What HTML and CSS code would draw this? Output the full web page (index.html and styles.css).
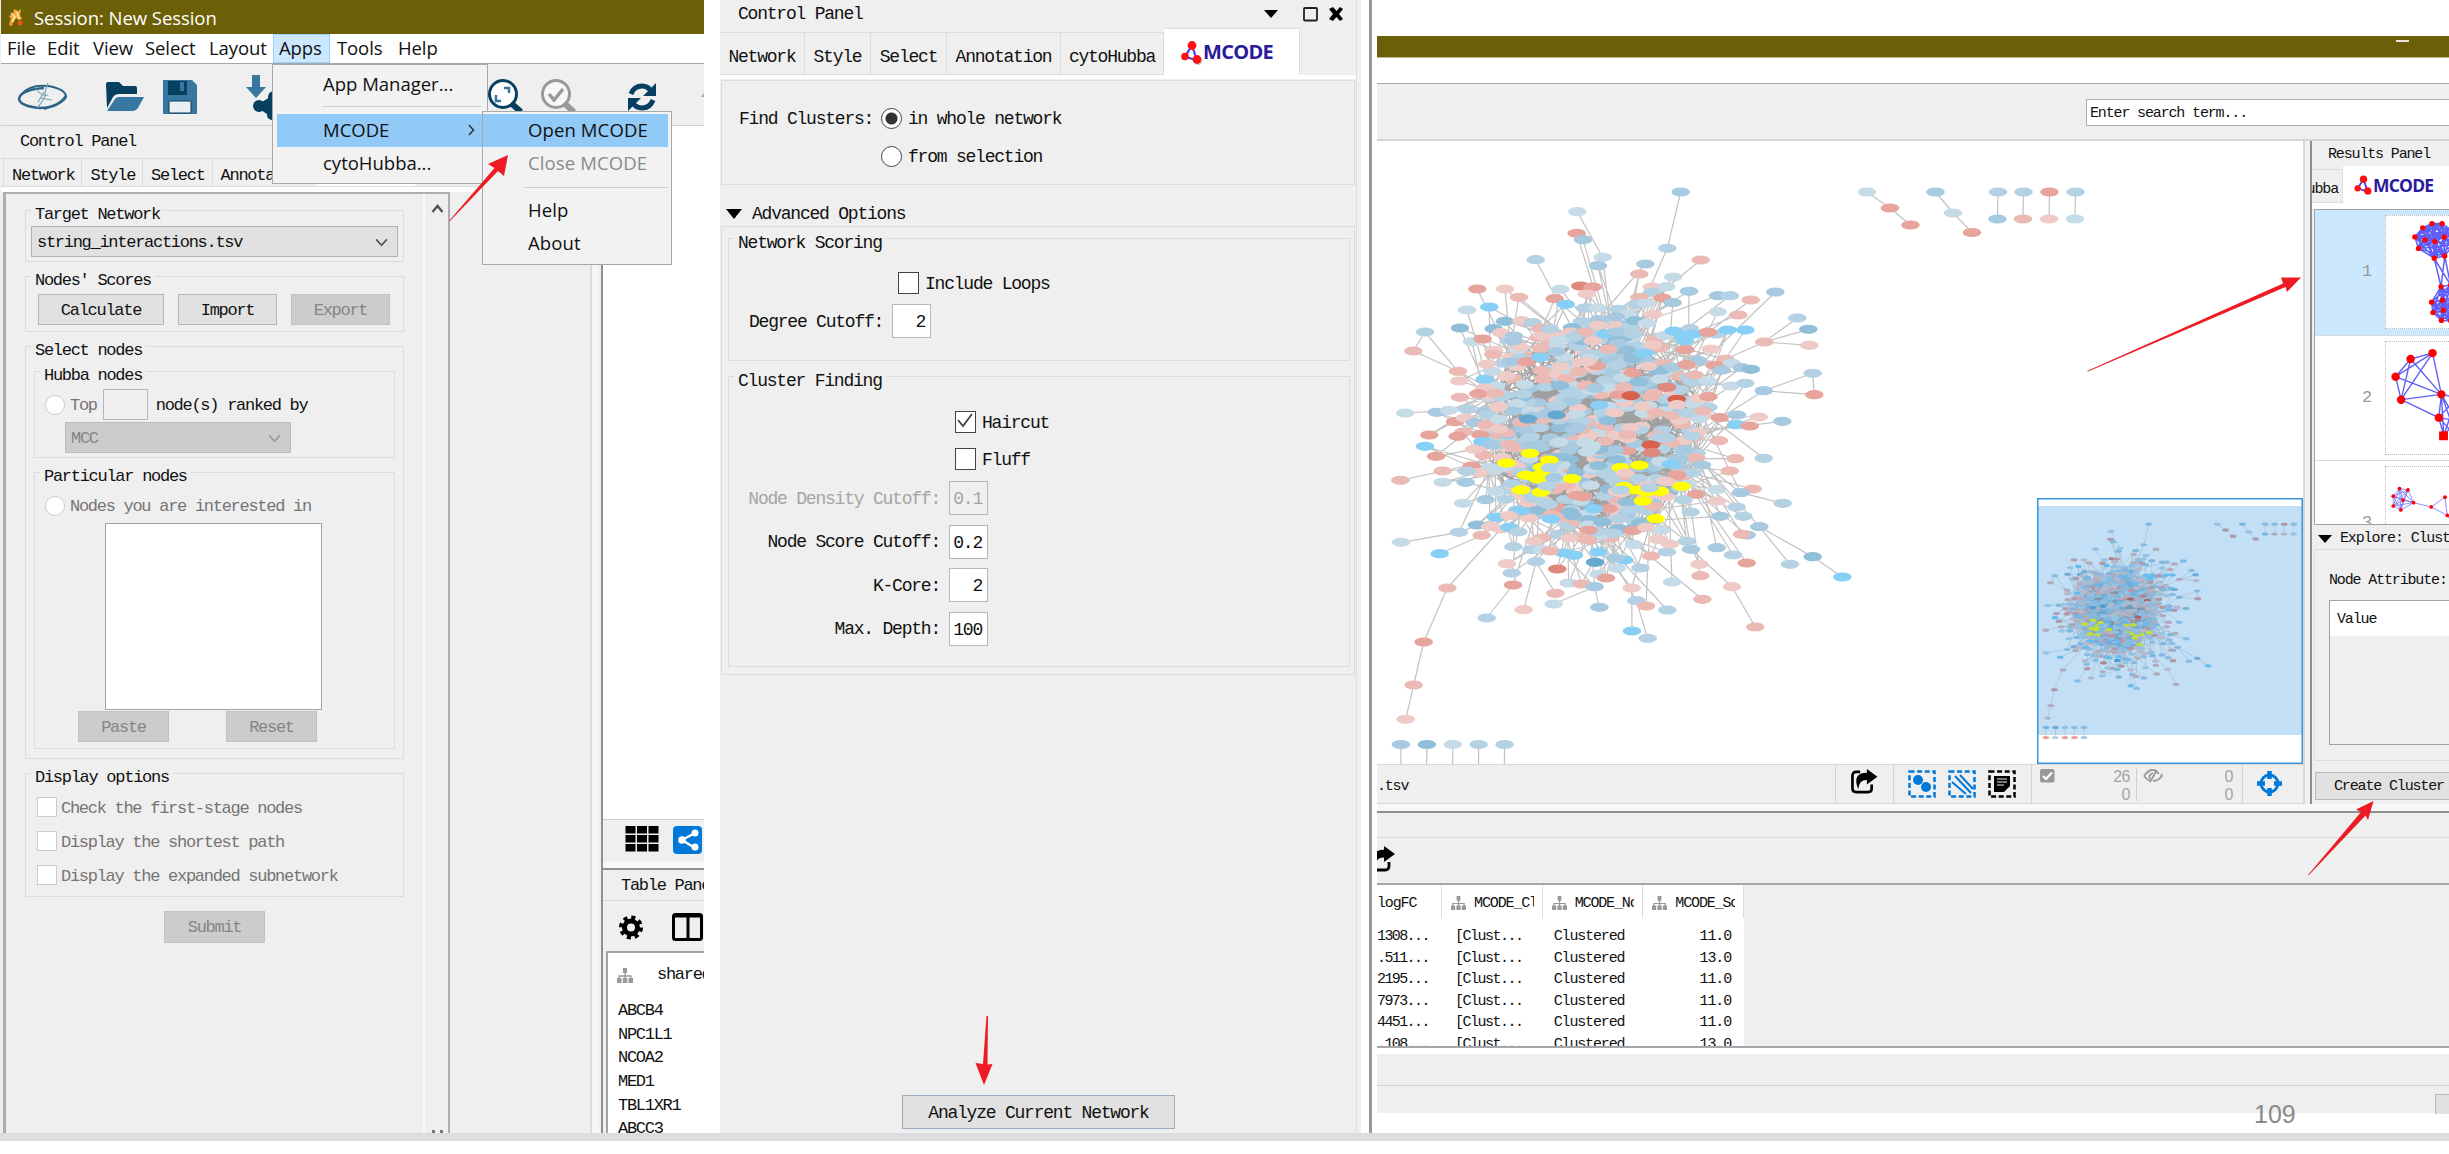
FILE: index.html
```html
<!DOCTYPE html>
<html lang="en">
<head>
<meta charset="utf-8">
<title>Session: New Session</title>
<link rel="stylesheet" href="styles.css">
</head>
<body>
<svg class="defs" width="0" height="0">
  <symbol id="logo" viewBox="0 0 22 24"><path d="M11 5L4 16L16 20Z" fill="none" stroke="#4a3cf0" stroke-width="2.2"/><circle cx="17" cy="20.5" r="4" fill="#999" opacity=".5"/><circle cx="11" cy="5" r="4.4" fill="#f11"/><circle cx="4" cy="16" r="3.8" fill="#f11"/><circle cx="16" cy="19" r="4.4" fill="#f11"/></symbol>
  <symbol id="share" viewBox="0 0 28 26"><path d="M10 3H6Q2 3 2 7v13q0 4 4 4h12q4 0 4-4v-4" fill="none" stroke="#000" stroke-width="2.8"/><path d="M17 0l11 8L17 16v-4.500Q9 11 8 21Q1 4 17 3.800z" fill="#000"/></symbol>
  <symbol id="tree" viewBox="0 0 18 16"><path d="M9 4v5M3 11V8h12v3M9 8v3" stroke="#999" stroke-width="1.300" fill="none"/><path d="M7 0h4v5H7zM1 10h4.500v5H1zM6.800 10h4.500v5H6.800zM12.500 10H17v5h-4.500z" fill="#999"/></symbol>
  <symbol id="chev" viewBox="0 0 14 10"><path d="M1 1.500L7 8l6-6.500" fill="none" stroke="currentColor" stroke-width="1.800"/></symbol>
</svg>
<main class="slide">
  <section class="left">
    <header class="titlebar"><svg width="16" height="19" viewBox="0 0 16 19"><path d="M6 1l4 2 3-2-1 6 2 4-3 1-3-2-3 5-4 2 2-6-2-3 4-2z" fill="#f5a83c"/><path d="M3 5l4 4-3 5M9 4l2 7" stroke="#ffe9a0" stroke-width="1.500" fill="none"/><circle cx="12" cy="15" r="2.500" fill="#e8561c"/><circle cx="3" cy="16" r="2" fill="#f08a2c"/></svg><span>Session: New Session</span></header>
    <nav class="menubar"><a class="w1">File</a><a class="w2">Edit</a><a class="w3">View</a><a class="w4">Select</a><a class="w5">Layout</a><a class="w6 on">Apps</a><a class="w7">Tools</a><a class="w8">Help</a></nav>
    <div class="toolbar">
      <svg width="704" height="61" viewBox="0 64 704 61">
        <g fill="none" stroke="#2c6488"><path d="M22 94Q30 84 48 86Q66 89 66 97Q64 103 44 109" stroke-width="2"/><path d="M44 88Q20 90 19 99Q20 106 40 108Q58 108 66 96" stroke-width="2.500"/><path d="M48 83q-3 8-3 12t-8 13M36 89q6 8 12 6M40 98l12 2M44 92l-6 10" stroke-width="1.200" stroke="#7fa3b8"/></g>
        <path d="M106 84q0-2 2-2h11l4 4h12q2 0 2 2v6h-18q-5 0-7 5l-5 9z" fill="#063f5f"/><path d="M107 111l8-12q1-2 4-2h25l-6 11q-2 3-5 3z" fill="#3878a0"/>
        <path d="M163 80h29l5 5v29h-34z" fill="#3878a0"/><path d="M168 81h19v14h-19z" fill="#063f5f"/><path d="M180 82h4v9h-4z" fill="#3878a0"/><path d="M169 101h22v12h-22z" fill="#e9eef2" stroke="#063f5f"/>
        <path d="M252 75h8v12h6l-10 11-10-11h6z" fill="#3878a0"/><g fill="#063f5f" stroke="#063f5f" stroke-width="4"><circle cx="259" cy="106" r="4"/><circle cx="274" cy="97" r="4"/><circle cx="272" cy="115" r="3"/><path d="M274 97l-15 9 13 9"/></g>
        <circle cx="503" cy="94" r="13.500" fill="#fff" stroke="#063f5f" stroke-width="3"/><path d="M504 88h5v5M501 101h-5v-6" fill="none" stroke="#3878a0" stroke-width="2.500"/><path d="M511 103l10 9" stroke="#063f5f" stroke-width="6"/>
        <circle cx="556" cy="94" r="13.500" fill="#f6f6f6" stroke="#999" stroke-width="3"/><path d="M549 94l5 6 9-11" fill="none" stroke="#999" stroke-width="3.500"/><path d="M564 103l10 9" stroke="#999" stroke-width="6"/>
        <g fill="none" stroke="#063f5f" stroke-width="5"><path d="M631 94q3-8 11-8 6 0 9 5M653 100q-3 8-11 8-6 0-9-5"/></g><path d="M656 83v13h-13zM628 111V98h13z" fill="#063f5f"/><path d="M704 93l-3 4h3z" fill="#aaa"/>
      </svg>
    </div>
    <div class="lbody">
      <div class="lcontrol">
        <div class="ptitle s">Control Panel</div>
        <div class="ltabs s"><span>Network</span><span>Style</span><span>Select</span><span>Annotation</span><i></i></div>
        <div class="lwork">
          <div class="lform s">
            <div class="forms">
              <div class="group g1"><b class="legend">Target Network</b><div class="combo c1">string_interactions.tsv<svg width="13" height="9"><use href="#chev"/></svg></div></div>
              <div class="group g2"><b class="legend">Nodes′ Scores</b><div class="row r2"><button class="btn b126">Calculate</button><button class="btn b99">Import</button><button class="btn b99 off">Export</button></div></div>
              <div class="group g3"><b class="legend">Select nodes</b>
                <div class="group g31"><b class="legend">Hubba nodes</b><div class="row top"><i class="radio"></i><span class="dim">Top</span><i class="field"></i><span>node(s) ranked by</span></div><div class="combo c2 off">MCC<svg width="13" height="9"><use href="#chev"/></svg></div></div>
                <div class="group g32"><b class="legend">Particular nodes</b><div class="row part"><i class="radio"></i><span class="dim">Nodes you are interested in</span></div><div class="area"></div><div class="row pr"><button class="btn b91 off">Paste</button><button class="btn b91 off">Reset</button></div></div>
              </div>
              <div class="group g4"><b class="legend">Display options</b><div class="checks dim"><div><i></i>Check the first-stage nodes</div><div><i></i>Display the shortest path</div><div><i></i>Display the expanded subnetwork</div></div></div>
              <button class="btn off submit">Submit</button>
            </div>
            <div class="scroll"><svg width="13" height="9" viewBox="0 0 13 9"><path d="M1.500 8L6.500 2l5 6" fill="none" stroke="#555" stroke-width="2.500"/></svg><svg width="12" height="3" viewBox="0 0 12 3"><path d="M1 0h3v3H1zM9 0h3v3H9z" fill="#777"/></svg></div>
          </div>
        </div>
      </div>
      <div class="lright">
        <div class="lcanvas"></div>
        <div class="lstrip"><svg width="101" height="42" viewBox="603 821 101 42"><path d="M625.500 827h10v7.500h-10zM637 827h10v7.500h-10zM648.500 827h10v7.500h-10zM625.500 836h10v7.500h-10zM637 836h10v7.500h-10zM648.500 836h10v7.500h-10zM625.500 845h10v7.500h-10zM637 845h10v7.500h-10zM648.500 845h10v7.500h-10z"/><rect x="673" y="827" width="29" height="28" rx="4" fill="#0078d7"/><path d="M695 834l-13 7 13 8" stroke="#fff" stroke-width="2.500" fill="none"/><g fill="#fff"><circle cx="695" cy="834" r="3.500"/><circle cx="682" cy="841" r="3.800"/><circle cx="695" cy="848" r="3.500"/></g></svg></div>
        <div class="ltable s">
          <div class="tp">Table Panel</div>
          <div class="tt"><svg width="101" height="50" viewBox="603 901 101 50"><circle cx="631" cy="927.500" r="6.500" fill="none" stroke="#000" stroke-width="5"/><circle cx="631" cy="927.500" r="10" fill="none" stroke="#000" stroke-width="4" stroke-dasharray="4 3.850"/><rect x="673.500" y="914.500" width="28" height="25" rx="2" fill="none" stroke="#000" stroke-width="3"/><path d="M673 916h29M688 914v26" stroke="#000" stroke-width="3"/></svg></div>
          <div class="tbox"><div class="th"><svg width="18" height="16"><use href="#tree"/></svg><span>shared name</span></div><div>ABCB4</div><div>NPC1L1</div><div>NCOA2</div><div>MED1</div><div>TBL1XR1</div><div>ABCC3</div></div>
        </div>
      </div>
    </div>
    <div class="menu m1"><div class="mi">App Manager...</div><hr><div class="mi hot">MCODE<svg width="7" height="12" viewBox="0 0 7 12"><path d="M1 1l4.500 5L1 11" fill="none" stroke="#333" stroke-width="1.500"/></svg></div><div class="mi">cytoHubba...</div></div>
    <div class="menu m2"><div class="mi hot">Open MCODE</div><div class="mi dis">Close MCODE</div><hr><div class="mi">Help</div><div class="mi">About</div></div>
  </section>

  <section class="mid">
    <div class="mpanel m">
      <div class="mtitle"><span>Control Panel</span><svg width="80" height="16" viewBox="0 0 80 16"><path d="M0 4h14l-7 8zM65 3l4-2 3.500 4L76 1l3 2-4 5 4 5-3 2-3.500-4-3.500 4-4-2 4-5z"/><rect x="40" y="2" width="13" height="12.500" rx="1" fill="none" stroke="#222" stroke-width="1.800"/></svg></div>
      <div class="mtabs"><span class="t1">Network</span><span class="t2">Style</span><span class="t3">Select</span><span class="t4">Annotation</span><span class="t5">cytoHubba</span><span class="brand"><svg width="22" height="25"><use href="#logo"/></svg>MCODE</span></div>
      <div class="find"><div class="row"><span class="fl">Find Clusters:</span><i class="radio sel"></i><span>in whole network</span></div><div class="row"><span class="fl"></span><i class="radio act"></i><span>from selection</span></div></div>
      <div class="adv"><svg width="16" height="10" viewBox="0 0 16 10"><path d="M0 0h16L8 10z"/></svg><span>Advanced Options</span></div>
      <div class="opts">
        <div class="group ns"><b class="legend">Network Scoring</b><div class="row loops"><i class="cb"></i><span>Include Loops</span></div><div class="row deg"><span>Degree Cutoff:</span><i class="num">2</i></div></div>
        <div class="group cf"><b class="legend">Cluster Finding</b><div class="row hc"><i class="cb"><svg width="18" height="17" viewBox="0 0 18 17"><path d="M2 8l5 6 9-12" fill="none" stroke="#444" stroke-width="1.800"/></svg></i><span>Haircut</span></div><div class="row fl2"><i class="cb"></i><span>Fluff</span></div>
          <div class="params"><span class="dis2">Node Density Cutoff:</span><i class="num dis2">0.1</i><span>Node Score Cutoff:</span><i class="num">0.2</i><span>K-Core:</span><i class="num">2</i><span>Max. Depth:</span><i class="num">100</i></div></div>
      </div>
      <button class="btn analyze">Analyze Current Network</button>
    </div>
    <div class="medge"></div>
  </section>

  <section class="right r">
    <div class="rtitle"><i></i></div>
    <div class="rmenu"></div>
    <div class="rtool"><div class="search">Enter search term...</div></div>
    <div class="rbody">
      <div class="view">
        <div class="canvas"><svg id="net" width="926" height="623" viewBox="1377 141 926 623"></svg>
          <svg class="mini" width="266" height="266" viewBox="2037 498.500 266 266"><rect x="2037" y="498.500" width="266" height="266" fill="#fff"/><use href="#graph" transform="matrix(.3673 0 0 .368 1531.400 454)"/><rect x="2037" y="506.500" width="266" height="229" fill="#0078d7" opacity=".24"/><rect x="2037.750" y="499.250" width="264.500" height="264.500" fill="none" stroke="#3a95dd" stroke-width="1.500"/></svg></div>
        <div class="status"><span class="file">.tsv</span><span class="cell e1"><svg width="28" height="25"><use href="#share"/></svg></span>
          <span class="cell e2"><svg width="110" height="30" viewBox="1907 770 110 30"><g fill="none" stroke="#0078d7" stroke-width="2.500" stroke-dasharray="5 2.600"><path d="M1909.500 772.500h25v25h-25zM1949.500 772.500h25v25h-25z"/><path d="M1989.500 772.500h25v25h-25z" stroke="#000"/></g><g fill="#0078d7"><circle cx="1918" cy="781" r="5"/><circle cx="1926" cy="788" r="5"/></g><path d="M1952 783l14 12M1955 777l16 17M1960 776l13 14" stroke="#0078d7" stroke-width="2"/><path d="M1994 777h16v10l-6 6h-10z"/><path d="M1997 780h10M1997 783h10M1997 786h7" stroke="#eee" stroke-width="1.200"/></svg></span>
          <span class="cell e3"><span class="cnt"><svg width="15" height="14" viewBox="0 0 15 14"><rect width="14.500" height="13.500" rx="2" fill="#999"/><path d="M3 7l3 3 6-6.500" fill="none" stroke="#fff" stroke-width="2.200"/></svg><em>26<br>0</em></span><span class="cnt k2"><svg width="20" height="14" viewBox="0 0 20 14"><path d="M1 7q8-11 15-2M1 7q3 4 6 5M18 5l1 2q-4 5-9 5M14 1L7 13M10 4q-5 2-3 6" fill="none" stroke="#999" stroke-width="1.800"/></svg><em>0<br>0</em></span></span>
          <span class="cell e4"><svg width="27" height="27" viewBox="0 0 27 27"><circle cx="13.500" cy="13.500" r="8.500" fill="none" stroke="#0078d7" stroke-width="2.800"/><path d="M13.500 1v8M13.500 18v8M1 13.500h8M18 13.500h8" stroke="#0078d7" stroke-width="4.500"/></svg></span></div>
      </div>
      <div class="split"></div>
      <div class="results">
        <div class="rp">Results Panel</div>
        <div class="rtabs"><span class="cut">Hubba</span><span class="brand rb"><svg width="19" height="20"><use href="#logo"/></svg>MCODE</span></div>
        <div class="list"><div class="item on"><span>1</span><svg class="thumb" id="c1" width="64" height="114" viewBox="85 84 64 114"></svg></div><div class="item"><span>2</span><svg class="thumb" id="c2" width="64" height="114" viewBox="85 210 64 114"></svg></div><div class="item last"><span>3</span><svg class="thumb" id="c3" width="64" height="114" viewBox="85 335 64 114"></svg></div></div>
        <div class="exp"><svg width="14" height="8" viewBox="0 0 14 8"><path d="M0 0h14L7 8z"/></svg>Explore: Cluster 1</div>
        <div class="ebox"><p>Node Attribute:</p><div class="vals"><div>Value</div></div></div>
        <button class="btn create">Create Cluster Network</button>
      </div>
    </div>
    <div class="rtable">
      <div class="h1"></div>
      <div class="h2"><svg width="28" height="26"><use href="#share"/></svg></div>
      <div class="grid"><table><thead><tr><th class="k1"><div>logFC</div></th><th><div><svg width="17" height="15"><use href="#tree"/></svg><span>MCODE_Clusters</span></div></th><th><div><svg width="17" height="15"><use href="#tree"/></svg><span>MCODE_Node_Status</span></div></th><th><div><svg width="17" height="15"><use href="#tree"/></svg><span>MCODE_Score</span></div></th></tr></thead>
      <tbody><tr><td>1308...</td><td>[Clust...</td><td>Clustered</td><td>11.0</td></tr><tr><td>.511...</td><td>[Clust...</td><td>Clustered</td><td>13.0</td></tr><tr><td>2195...</td><td>[Clust...</td><td>Clustered</td><td>11.0</td></tr><tr><td>7973...</td><td>[Clust...</td><td>Clustered</td><td>11.0</td></tr><tr><td>4451...</td><td>[Clust...</td><td>Clustered</td><td>11.0</td></tr><tr><td>.108...</td><td>[Clust...</td><td>Clustered</td><td>13.0</td></tr></tbody></table></div>
      <div class="h3"></div><div class="h4"><i></i></div>
    </div>
  </section>
  <div class="page">109</div>
  <svg class="arrows" width="2449" height="1154"><g fill="#ed1c24"><path d="M449 221L494.500 168L488 164L508 155L504 176L498 171L450 221z"/><path d="M2087 371L2283 283.500L2281 277.500H2301L2287 292L2285.500 287L2088 371.500z"/><path d="M2308 875L2361 812L2356 809.500L2373.500 801L2368 820L2365.500 815.500L2308.500 875.500z"/><path d="M986.500 1016L983 1064L975.500 1063L984 1085L992.500 1064L987.500 1064.500L988 1016z"/></g></svg>
</main>
<footer class="rule"></footer>
<script src="network.js"></script>
</body>
</html>
```
FILE: styles.css
```css
*{box-sizing:border-box}
body{margin:0;width:2449px;height:1154px;overflow:hidden;background:#fff;font-family:"Liberation Mono",monospace;color:#111}
.defs{position:absolute}
svg{display:block;flex:none}
i,em{font-style:normal}
.slide{position:relative;display:flex;height:1133px;overflow:hidden}
.rule{height:8px;background:#dcdddf}
.s,.s button{font:17px/20px "Liberation Mono",monospace;letter-spacing:-1.28px}
.m,.m button{font:18px/20px "Liberation Mono",monospace;letter-spacing:-1.22px}
.r,.r button{font:15px/20px "Liberation Mono",monospace;letter-spacing:-1.15px}
.row{display:flex;align-items:center}
.left,.mid,.right{flex:none;overflow:hidden;white-space:nowrap}
.group{border:1.500px solid #dcdcdc}
.legend{display:block;width:max-content;font-weight:400;height:20px;line-height:22px;margin:-7px 0 0 5px;padding:0 4px;background:#efefef}
.btn{display:block;flex:none;margin:0;padding:2px 0 0;height:31px;border:1.500px solid #b4b6ba;background:#e1e1e1;color:#111;text-align:center;white-space:nowrap}
.btn.off{background:#ccc;border-color:#c2c2c2;color:#858585}
.dim{color:#757575}
.radio{flex:none;width:20px;height:20px;border:1.500px solid #ccc;border-radius:50%;background:#fff}
.radio+span,.cb+span,.field+span{padding-top:2px}

.left{position:relative;width:704px;padding-left:1px;background:#efefef}
.titlebar{height:34px;display:flex;align-items:center;gap:10px;padding-left:7px;background:#6b5f07;color:#fff;font:18.500px "Open Sans",sans-serif;letter-spacing:-.05px}
.menubar{height:30px;display:flex;background:#fff;border-bottom:1.500px solid #a8a8a8;font:18.500px/28px "Open Sans",sans-serif;letter-spacing:-.1px}
.w1{margin-left:6px;width:40px}.w2{width:46px}.w3{width:52px}.w4{width:64px}.w5{width:64px}.w6{width:57px}.w7{width:68px;padding-left:7px}
.on.w6{background:#cce8ff;border:1px solid #99d1ff;padding-left:5px;line-height:26px}
.toolbar{height:62px;border-bottom:1.500px solid #d0d0d0}
.toolbar svg{margin-left:-1px}
.lbody{display:flex;height:1007px}
.lcontrol{width:602px;border-right:2px solid #8f8f92}
.ptitle{height:32px;padding-left:19px;line-height:32px}
.ltabs{display:flex;height:29px;border-top:1px solid #ddd;border-bottom:1px solid #ddd;padding-left:2px}
.ltabs span{padding:7px 7px 0 8px;border-left:1px solid #dcdcdc}
.ltabs i{width:98px;background:#fff;margin-top:-1px}
.lwork{height:946px;border-top:5px solid #fff;margin-right:9px;border-right:2px solid #dcdcdc;box-shadow:7px 0 #f6f6f6}
.lform{display:flex;width:447px;margin-left:2px;height:960px;border:2px solid #abadb3}
.lform{border-left-width:3px}
.forms{width:417px;padding:16px 0 0 19px;flex:none}
.forms>.group{width:379px;margin-bottom:14px}
.scroll{flex:1;border-left:2px solid #fafafa;padding:10px 0 0 6px;height:939px;display:flex;flex-direction:column;justify-content:space-between}
.g1{height:52px}.g2{height:56px}.g3{height:413px}.g4{height:124px}
.combo{display:flex;justify-content:space-between;align-items:center;padding:2px 9px 0 5px;border:1.500px solid #b0b2b6;background:#e1e1e1}
.combo svg{color:#555}
.combo.off{background:#ccc;border-color:#bcbcc0;color:#858585}.combo.off svg{color:#999}
.c1{margin:2px 0 0 5px;width:367px;height:31px}
.c2{margin:2px 0 0 30px;width:226px;height:31px}
.r2{margin:4px 0 0 12px;gap:14px}
.b126{width:126px}.b99{width:99px}.b91{width:91px}
.g31,.g32{margin-left:8px;width:361px}
.g31{height:87px;margin-top:11px}
.top{margin:4px 0 0 10px}
.top .dim{margin-left:5px}
.field{width:45px;height:31px;border:1.500px solid #b4b6ba;margin:0 8px 0 6px}
.g32{height:277px;margin-top:14px}
.part{height:20px;margin:10px 0 0 10px;gap:5px}
.area{margin:7px 0 0 70px;width:217px;height:187px;background:#fff;border:1.500px solid #9fa2a8}
.pr{margin-left:43px;gap:57px;margin-top:1px}
.checks{display:flex;flex-direction:column;gap:14px;margin:10px 0 0 11px}
.checks div{display:flex;gap:4px;height:20px;line-height:23px}
.checks i{width:20px;height:20px;background:#fff;border:1.500px solid #ccc}
.submit{margin-left:139px;width:101px;height:32px}
.lright{width:101px;overflow:hidden}
.lcanvas{height:694px;background:#fff;border-bottom:1.500px solid #ccc}
.lstrip{height:50px;border-bottom:2px solid #8f8f92;box-shadow:inset 0 -6px #f8f8f8}
.tp{height:31px;padding-left:18px;line-height:32px;border-bottom:1.500px solid #dadada}
.tt{height:50px}
.tbox{margin-left:3px;height:190px;border-top:2px solid #9fa2a8;border-left:2px solid #9fa2a8;background:#fff;padding-left:10px;overflow:hidden}
.tbox>div{height:23.700px;line-height:24.700px}
.tbox>.th{display:flex;gap:23px;align-items:center;height:45px;margin-left:-2px;margin-bottom:1px}
.menu{position:absolute;background:#f2f2f2;border:1.500px solid #a8a8a8;font:18.500px/31px "Open Sans",sans-serif}
.menu hr{margin:0;border:0;border-top:1.500px solid #cfcfcf}
.mi{height:33px;padding-bottom:2px}
.hot{background:#91c9f7}
.dis{color:#8a8a8a}
.m1{left:272px;top:64px;width:216px;height:120px;padding:3px 0 0 4px}
.m1 .mi{padding-left:46px;display:flex;align-items:center;justify-content:space-between;padding-right:12px}
.m1 hr{margin:5px 6px 7px 45px}
.m2{left:482px;top:111px;width:190px;height:154px;padding:2px 3px 0 0}
.m2 .mi{padding-left:45px;letter-spacing:.12px}
.m2 hr{margin:7px 0 6px 41px}

.mid{width:657px;margin-left:16px;display:flex}
.mpanel{width:637px;background:#efefef;border-right:1.500px solid #dcdcdc}
.mtitle{height:29px;display:flex;justify-content:space-between;align-items:center;padding:0 12px 2px 18px}
.mtabs{display:flex;align-items:flex-end;height:50px;border-bottom:4px solid #fff}
.mtabs>span{height:43px;line-height:48px;text-align:center;border:1px solid #dcdcdc;border-left:0;margin-bottom:0}
.t1{width:85px}.t2{width:66px}.t3{width:76px}.t4{width:114px}.t5{width:103px}
.brand{display:flex;align-items:center;color:#2a1a9c;font:700 20px "Open Sans",sans-serif;letter-spacing:-.7px;background:#fff}
.mtabs>.brand{width:136px;height:47px;line-height:46px;padding-left:17px;border-bottom:0}
.find{margin:1px;height:105px;border:1.500px solid #dcdcdc;padding:27px 0 0 17px;display:flex;flex-direction:column;gap:18px}
.find .row{height:20px}
.fl{width:142px;padding-top:2px}
.sel,.act{width:21px;height:21px;border-color:#444;margin-right:6px}
.sel{background:radial-gradient(circle,#333 0 5.500px,#fff 6.500px)}
.adv{display:flex;height:40px;align-items:center;gap:10px;padding:15px 0 0 6px}
.opts{margin:0 1px;height:449px;border:1.500px solid #dcdcdc;padding:11px 0 0 6px}
.ns,.cf{width:622px}
.ns{height:123px;margin-bottom:15px}.cf{height:291px}
.cb{width:21px;height:22px;background:#fff;border:1.800px solid #444;margin-right:6px;flex:none}
.loops{margin:20px 0 0 169px}
.deg{margin:10px 0 0 20px}
.deg span{padding-top:2px}
.num{width:39px;height:34px;line-height:34px;border:1.500px solid #b4b6ba;background:#fff;text-align:right;padding-right:5px}
.deg .num{margin-left:9px}
.hc{margin:21px 0 0 226px}
.fl2{margin:15px 0 0 226px}
.params{display:grid;grid-template-columns:211px 39px;column-gap:9px;row-gap:9.500px;align-items:center;margin-top:11px}
.params span{text-align:right;padding-top:1px}
.dis2{color:#a5a5a5}.num.dis2{background:#efefef}
.analyze{width:273px;height:34px;margin:420px 0 0 182px;border-color:#9badbf}
.medge{flex:1;margin-right:0;border-left:4px solid #f0f0f0;background:linear-gradient(90deg,#fff 0 8px,#99999c 8px 11px,#fff 11px)}

.right{width:1072px;padding-top:36px}
.rtitle{height:22px;background:#6b5f07;border-bottom:1px solid #b9b084;display:flex;padding:4px 0 0 1019px}
.rtitle i{width:13px;height:1.500px;background:#e8e6d4}
.rmenu{height:26px;border-bottom:1.500px solid #a8a8a8}
.rtool{height:57px;background:#efefef;border-bottom:2px solid #d4d4d4;padding:15px 0 0 709px}
.search{height:27px;border:1.500px solid #abadb3;border-right:0;background:#fff;padding:4px 3px;line-height:20px}
.rbody{display:flex;height:663px;background:#efefef}
.view{width:926px}
.canvas{position:relative;height:623px;background:#fff}
.mini{position:absolute;right:0;bottom:0}
.status{display:flex;height:40px;border-top:1px solid #d8d8d8;border-bottom:1.500px solid #d8d8d8}
.file{width:458px;line-height:43px;letter-spacing:-1.2px}
.cell{border-left:1.500px solid #d4d4d4;display:flex}
.e1{width:58px;padding:4px 0 0 14px}.e2{width:138px;padding:4px 0 0 13px}.e3{width:211px;padding:3px 0 0 8px}.e4{width:61px;padding:5px 0 0 13px}
.cnt{display:flex;justify-content:space-between;width:90px;height:33px;font:16px/18px "Liberation Sans",sans-serif;color:#a5a5a5;text-align:right;letter-spacing:-.5px}
.cnt svg{margin-top:1px}
.k2{margin-left:6px;padding-left:6px;width:97px;border-left:1.500px solid #d0d0d0}
.split{width:9px;border-left:2px solid #d8d8d8;border-right:2.500px solid #8f8f92;background:#f2f2f2}
.results{width:137px;overflow:hidden}
.rp{height:25px;padding-left:16px;line-height:27px}
.rtabs{display:flex;height:43px;border-bottom:6px solid #fff}
.cut{width:31px;margin-top:3px;border:1px solid #dcdcdc;border-left:0;display:flex;justify-content:flex-end;padding-right:4px;line-height:40px;overflow:hidden}
.rb{flex:1;padding-left:11px;font-size:17.500px;letter-spacing:-.8px;align-items:center}
.list{margin-left:2px;height:316px;border:1.500px solid #9fa2a8;border-right:0;background:#fff;overflow:hidden}
.item{height:125.500px;border-bottom:1.500px solid #d8d8d8;display:flex;align-items:center;color:#999}
.item.on{background:#cce8ff}
.item span{width:70px;padding-left:47px;font-size:17px}
.thumb{background:#fff;border-left:1px dotted #bbb;border-top:1px dotted #bbb;border-bottom:1px dotted #bbb}
.exp{height:24px;display:flex;align-items:center;gap:8px;padding:4px 0 0 6px}
.ebox{margin-left:2px;height:212px;border:1.500px solid #dcdcdc;border-right:0;padding-left:14px}
.ebox p{margin:21px 0 9px}
.vals{height:145px;border:1.500px solid #9fa2a8;border-right:0}
.vals div{height:35px;background:#fff;padding:9px 0 0 7px}
.create{margin:11px 0 0 3px;width:160px;height:28px}
.create{text-align:left;padding-left:18px}
.rtable{height:309px;background:#efefef;border-top:7px solid #f8f8f8}
.h1{height:27px;border-top:2px solid #8f8f92;border-bottom:1.500px solid #dadada}
.h2{height:47px;padding-top:8px;border-bottom:2px solid #a4a6ab}
.h2 svg{margin-left:-10px}
.grid{height:163px;border-bottom:2px solid #a4a6ab;overflow:hidden}
table{border-collapse:collapse;background:#fff;table-layout:fixed;width:367px}
th{height:39px;padding:0 0 6px;font-weight:400;text-align:left;width:100.500px}
th.k1{width:65px}
th div{display:flex;gap:7px;align-items:center;border-right:1px solid #dcdcdc;height:33px;padding:4px 8px 0 8px}
.k1 div{padding-left:0}
th span{overflow:hidden}
td{height:21.600px;padding:4px 0 0 11px;line-height:17.600px}
td:first-child{padding-left:0;letter-spacing:-1.600px}td:last-child{text-align:right;padding-right:13px}
td:nth-child(2){padding-left:13px;letter-spacing:-1.500px}
.h3{height:38px;border-top:6px solid #fff;border-bottom:1.500px solid #d2d2d2}
.h4{height:28px;display:flex;justify-content:flex-end;padding-top:8px}
.h4 i{width:14px;border:1.500px solid #b4b6ba;border-width:1.500px 0 0 1.500px;background:#e1e1e1}
.page{position:absolute;left:2254px;top:1100px;font:25px/28px "Liberation Sans",sans-serif;color:#8a8a8a}
.arrows{position:absolute;left:0;top:0;pointer-events:none}
```
FILE: network.js
```js
// Node fills: a-e cool shades, s sky, p-u warm shades, y selected.
const FILL = {a:'#c5dbe8',b:'#b5d2e4',c:'#a7cae0',d:'#91bfda',e:'#66a8d0',s:'#87cff5',p:'#eecbc7',q:'#ebbab5',r:'#e6a49c',t:'#df887d',u:'#d9604f',y:'#ffff00'};
let seed = 11;
const rnd = () => (seed = (seed * 16807) % 2147483647) / 2147483647;

const UPPER = `622,245,a 620,310,r 639,329,c 698,382,a 684,407,c 497,389,b 826,402,c 808,432,q 892,355,b 932,186,c 992,390,q 909,441,a 322,477,r 405,477,p 447,502,q 554,506,r 571,478,a 587,523,s 631,468,t 668,471,r 650,492,p 645,534,b 684,534,a 845,471,p 889,470,a 847,487,b 877,504,r 908,518,c 808,502,q 799,523,b 828,520,a 957,484,c 1044,497,c 1080,497,b 1142,510,q 1216,486,c 1043,545,a 1105,555,q 1282,564,b 1315,598,d 1318,646,p 1183,636,q 358,531,s 291,540,a 270,594,d 165,606,b 130,663,q 371,596,d 405,574,d 455,572,p 306,635,a 338,627,r 393,608,p 432,618,c 488,578,b 512,594,q 540,596,b 418,631,b 745,538,b 770,552,a 737,560,c 685,569,c 795,572,d 685,586,p 850,553,p 830,580,a 705,612,s 740,606,c 788,612,b 668,632,p 645,607,q 610,622,b 565,632,a 885,617,a 960,596,b 1040,612,b 911,603,s 940,620,s 970,612,s 945,632,s 1014,607,r 1073,600,s 1126,600,s 946,659,r 1022,657,p 1066,688,q 1085,700,a 264,724,q 268,753,p 270,802,q 344,748,s 367,724,a 350,703,p 372,661,p 370,673,q 450,651,p 420,696,c 470,695,r 511,682,s 559,665,c 343,774,p 325,791,r 376,790,q 106,849,a 200,847,c 237,841,a 291,838,b 255,875,r 285,864,p 315,878,c 347,884,q 178,915,r 280,906,q 263,919,r 165,949,s 337,935,s 312,958,p 366,945,c 418,943,q 388,896,p 388,868,a 428,843,c 385,832,p 474,867,e 560,855,e 688,825,s 745,795,r 782,797,u 843,800,q 891,772,t 920,808,u 842,945,u 922,824,p 1034,706,r 1055,720,c 1115,713,c 1143,718,d 1013,753,a 974,735,q 907,712,c 985,692,c 950,704,r 1015,800,r 1082,768,a 1126,760,b 1181,782,c 1328,730,b 1333,794,r 1237,874,c 1166,861,p 1049,863,r 1101,855,c 1099,884,s 1139,888,r 1047,932,q 966,918,b 1015,832,b 998,843,q 770,660,d 745,640,c 787,686,d 680,707,r 650,695,p 788,728,r 835,709,p 715,657,q 720,690,c 740,706,b 822,670,s 870,653,q 848,645,p 806,756,d 570,767,d 625,725,q 520,747,q 515,722,q 430,632,c 1493,186,a`;
const LOWER = `91,151,q 218,123,q 198,79,r 218,157,a 287,157,c 305,108,r 328,128,p 290,124,b 279,220,a 347,209,c 93,337,a 209,371,s 267,307,b 321,285,d 335,316,q 378,262,s 360,290,p 392,297,p 418,292,s 445,305,b 452,243,s 418,257,p 376,184,a 407,207,b 543,267,s 430,350,b 411,401,p 425,429,b 429,465,r 350,564,b 461,539,p 498,395,b 556,490,q 551,522,a 562,417,t 582,369,s 612,376,s 685,366,s 675,397,e 763,390,s 735,384,c 740,415,a 811,414,b 686,433,a 708,444,r 596,459,a 635,462,q 674,470,c 688,532,c 785,474,p 799,512,b 828,528,q 786,603,s 833,625,b 892,540,b 906,456,a 988,403,p 991,437,q 997,508,q 1086,470,p 1156,591,q 1130,399,r 1089,375,b 1040,353,c 963,358,c 950,334,b 843,378,q 891,366,b 900,342,p 792,344,a 730,310,b 788,302,r 655,301,r 633,323,q 655,330,q 598,324,p 515,324,q 492,333,p 484,359,b 515,359,a 540,363,q 672,236,s 697,276,d 748,266,b 1168,290,c 1130,315,c 1116,313,q 1120,259,b 1100,231,b 1051,259,c 962,246,b 1042,213,p 1238,220,b 1148,177,q 1112,188,c 1040,179,a 1079,123,q 1096,86,q 1181,85,b 978,193,r 996,105,c 928,86,c 902,103,s 966,129,b 922,136,r 885,153,p 941,209,b 1260,403,b 1328,380,d 1417,441,s 232,474,q 161,636,r 131,765,q 107,868,p 873,300,a 828,292,p 862,328,p 845,68,t 770,216,d 685,107,d 640,200,r 887,200,p 850,229,q 775,240,b 480,70,y 409,99,y 468,136,y 515,132,y 503,146,y 538,90,y 515,112,y 453,180,y 512,187,y 606,146,y 808,106,y 752,113,y 800,180,y 762,170,y 830,186,y 818,213,y 857,266,y 935,169,y 870,184,y 540,113,b 752,180,b 838,174,b 765,129,p 552,143,c 530,168,b`;
const parse = (s, dy) => s.trim().split(/\s+/).map(t => { const [x, y, c] = t.split(','); return [1370 + x / 3, dy + y / 3, c]; });
const rim = [...parse(UPPER, 130), ...parse(LOWER, 430)];

// Dense middle of the network
const CX = 1592, CY = 430, core = [];
for (let i = 0; i < 480; i++) {
  const a = rnd() * Math.PI * 2, r = Math.pow(rnd(), .58);
  const x = CX + Math.cos(a) * r * 112, y = CY + Math.sin(a) * r * 110;
  core.push([x, y, 'aaaaaabbbbbbbbbccccccdddpppppqqqqr'[Math.floor(rnd() * 34)]]);
}

// Small components and long chains
const extra = [[1867,192,'a'],[1890,208,'r'],[1910.500,225,'r'],[1935.500,192,'c'],[1953,213,'a'],[1972,232.500,'r'],[1998,192,'b'],[1997.500,219,'c'],[2023.500,192,'b'],[2023,219,'q'],[2049.500,192,'r'],[2049,219,'p'],[2075.500,192,'b'],[2075,219,'a']];
const links = [[0,1],[1,2],[3,4],[4,5],[6,7],[8,9],[10,11],[12,13]].map(([p, q]) => [extra[p], extra[q]]);
'cdabb'.split('').forEach((c, i) => {
  const top = [1401 + i * 25.900, 744.500, c], low = [1400.700 + i * 25.900, 772, 'rbrrc'[i]];
  extra.push(top, low); links.push([top, low]);
});
const near = (x, y) => rim.reduce((m, n) => Math.hypot(n[0] - x, n[1] - y) < Math.hypot(m[0] - x, m[1] - y) ? n : m);
const U = (x, y) => near(1370 + x / 3, 130 + y / 3), L = (x, y) => near(1370 + x / 3, 430 + y / 3);
const hub = [[U(932,186),U(892,355)],[L(107,868),L(131,765)],[L(131,765),L(161,636)],[L(161,636),L(232,474)],[L(232,474),L(392,297)],[L(1417,441),L(1328,380)],[L(1328,380),L(1168,290)],[L(1260,403),L(1168,290)],[L(1156,591),L(1086,470)],[L(1086,470),L(962,358)],[U(1328,730),U(1181,782)],[U(1333,794),U(1181,782)],[U(1328,730),U(1333,794)],[U(1282,564),U(1183,636)],[U(1315,598),U(1183,636)],[U(1318,646),U(1183,636)],[U(1183,636),U(1066,688)],[U(165,606),U(130,663)],[U(165,606),U(264,724)],[U(130,663),U(264,724)],[L(350,564),L(429,465)],[L(93,337),L(267,307)],[L(91,151),L(218,123)],[L(688,532),L(674,470)],[L(786,603),L(785,474)],[L(833,625),L(799,512)],[L(556,490),L(498,395)],[L(461,539),L(498,395)],[L(551,522),L(674,470)],[L(209,371),L(335,316)],[L(1238,220),L(1112,188)],[U(106,849),U(237,841)],[U(622,245),U(698,382)]];
const done = new Set(hub.map(h => h[0]));
links.push(...hub);
for (const n of rim) {
  if (done.has(n) || n[0] > 1850) continue;
  const dist = Math.hypot(n[0] - CX, n[1] - CY), times = dist > 170 ? 1 : 2;
  for (let k = 0; k < times; k++) {
    let best = null, bd = 1e9;
    for (let t = 0; t < 22; t++) {
      const c = core[Math.floor(rnd() * core.length)], d = Math.hypot(c[0] - n[0], c[1] - n[1]);
      if (d < bd) { bd = d; best = c; }
    }
    links.push([n, best]);
  }
}
const dense = [];
for (let i = 0; i < 2600; i++) {
  const p = core[Math.floor(rnd() * core.length)], q = core[Math.floor(rnd() * core.length)];
  if (Math.hypot(p[0] - q[0], p[1] - q[1]) < 100) dense.push([p, q]);
}
const f = v => v.toFixed(1);
const path = list => list.map(([p, q]) => `M${f(p[0])} ${f(p[1])}L${f(q[0])} ${f(q[1])}`).join('');
const dot = n => `<ellipse cx="${f(n[0])}" cy="${f(n[1])}" rx="9.300" ry="4.600" fill="${FILL[n[2]]}"/>`;
document.getElementById('net').innerHTML = `<g id="graph"><path d="${path(dense)}" stroke="#808080" stroke-width="1.100" opacity=".75"/><path d="${path(links)}" stroke="#b4b4b4" stroke-width="1.200" opacity=".8"/>${[...core, ...rim.filter(n => n[0] < 1860), ...extra].map(dot).join('')}</g>`;

// Cluster thumbnails
function cluster(id, nodes, edges, r, width, tail = '') {
  const d = edges.map(([a, b]) => [nodes[a].map(v => v / 3), nodes[b].map(v => v / 3)]);
  document.getElementById(id).innerHTML = `<path d="${path(d)}" stroke="#2a2af5" stroke-width="${width}" opacity=".75"/>` + nodes.map(n => `<circle cx="${f(n[0] / 3)}" cy="${f(n[1] / 3)}" r="${r}" fill="#f00"/>`).join('') + tail;
}
const all = (from, to) => { const e = []; for (let i = from; i < to; i++) for (let j = i + 1; j < to; j++) e.push([i, j]); return e; };
cluster('c1', [[343,316],[367,288],[395,275],[426,275],[374,325],[404,330],[433,316],[354,351],[402,381],[434,374],[455,295],[460,340],[423,468],[394,515],[398,547],[430,540],[424,571],[427,509],[452,463],[460,500],[452,572],[465,540]], [...all(0, 12), ...all(12, 22), [8,12],[8,18],[9,12],[9,18]], 2.7, 1.5);
cluster('c2', [[397,664],[330,682],[284,736],[301,806],[424,790],[416,861],[470,800],[470,870],[470,920],[431,916]], [[0,1],[0,2],[0,3],[0,4],[1,2],[1,3],[1,4],[2,3],[2,4],[3,4],[3,5],[4,5],[4,6],[4,7],[4,8],[5,6],[5,7],[5,8],[4,9],[5,9],[9,6],[9,7]], 4.3, 1.4, '<path d="M139 301h9v9h-9z" fill="#f00"/>');
cluster('c3', [[296,1071],[322,1075],[277,1094],[307,1106],[277,1124],[300,1136],[339,1114],[393,1127],[435,1097],[442,1153],[460,1180]], [...all(0, 7), [6,7],[7,8],[7,9],[8,9],[9,10]], 1.9, .7);
```
